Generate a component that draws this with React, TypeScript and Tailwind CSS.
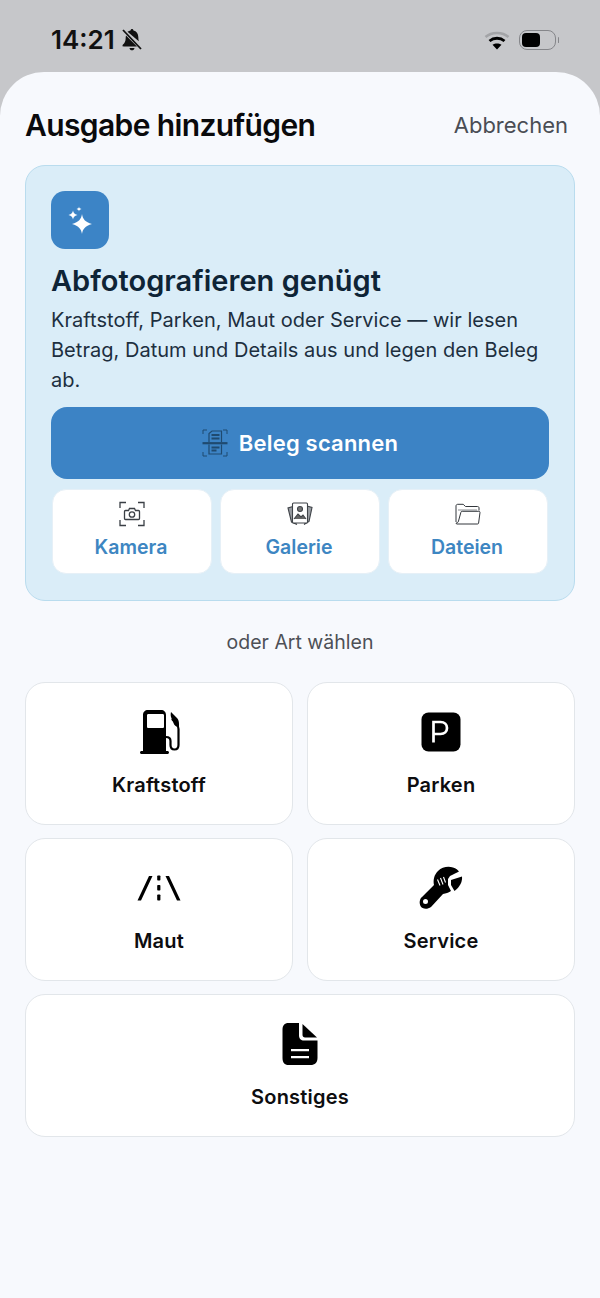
import React from 'react';

const FuelIcon = () => (
  <svg width="44" height="46" viewBox="-2 0 44 46" fill="none">
    <path fillRule="evenodd" clipRule="evenodd" d="M4 6c0-3 2-5 5-5h13c3 0 5 2 5 5v36h1.500c.8 0 1.500.6 1.500 1.500S29.300 45 28.500 45h-26C1.700 45 1 44.300 1 43.500S1.700 42 2.500 42H4V6ZM9.500 5C8.500 5 8 5.500 8 6.500v11c0 1 .5 1.500 1.500 1.500h14c1 0 1.500-.5 1.500-1.500v-11c0-1-.5-1.500-1.500-1.500h-14Z" fill="#000" />
    <path d="M27 28c3 0 4.500 1 4.500 4v4c0 2.500 1.500 4.500 4 4.500s4-2 4-4.500V20c0-2-.8-3.500-2-5.500l-4-4" stroke="#000" strokeWidth="2.200" strokeLinecap="round" />
    <path d="M32 3l6 6c1.500 1.500 2 3.500 2 6v3c-3 0-5-2-5.500-4L32 8c-.4-1.500-.4-3.500 0-5Z" fill="#000" />
  </svg>
);

const ParkingIcon = () => (
  <svg width="40" height="40" viewBox="0 0 40 40">
    <rect x="0.500" y="0.500" width="39" height="39" rx="7" fill="#000" />
    <path d="M12.500 30.500V10h7c4 0 6.500 2.400 6.500 6s-2.500 6-6.500 6h-7" fill="none" stroke="#fff" strokeWidth="2.700" />
  </svg>
);

const RoadIcon = () => (
  <svg width="44" height="26" viewBox="0 0 44 26">
    <path d="M12 1h3.500L4 25.500H.5L12 1ZM28.500 1H32l11.500 24.500H40L28.500 1Z" fill="#000" />
    <rect x="20.200" y="0.500" width="3.200" height="5" rx="0.800" fill="#000" />
    <rect x="20.200" y="10" width="3.200" height="5.500" rx="0.800" fill="#000" />
    <rect x="20.200" y="19.500" width="3.200" height="6" rx="0.800" fill="#000" />
  </svg>
);

const WrenchIcon = () => (
  <svg width="44" height="44" viewBox="0 0 44 44">
    <path fillRule="evenodd" clipRule="evenodd" d="M3 31L15 19C14 14 15 9 19 5C23 1 29 0 34 1.500C37 2.500 39 4 40 5.500L31 10L29 13L29 19L32 25C29 27 27 27.500 24 28L12 41C8 44 3 43 1.500 40C0 37 .5 33 3 31ZM9 35.500a2.500 2.500 0 1 0-5 0a2.500 2.500 0 1 0 5 0Z" fill="#000" />
    <path d="M18.500 13.500l2.500 6M21.500 12l2.500 6.500M24.500 11l2 5.500" stroke="#fff" strokeWidth="1.100" fill="none" />
    <path d="M32 14L43 10.500C43.500 15 41.500 20.500 35.500 25L32 19Z" fill="#000" />
  </svg>
);

const DocIcon = () => (
  <svg width="36" height="44" viewBox="0 0 36 44">
    <path fillRule="evenodd" clipRule="evenodd" d="M6.500 1H17v12.500c0 3 2 5 5 5h13.500V36c0 4.500-2.500 7-7 7h-22c-4 0-6-2.500-6-7V7.500C.5 3.500 2.500 1 6.500 1ZM9 27h18v2.300H9V27Zm0 7h18v2.300H9V34Z" fill="#000" />
    <path d="M20.500 2L35 15.500H23c-1.500 0-2.500-1-2.500-2.500V2Z" fill="#000" />
  </svg>
);

const SparkleIcon = () => (
  <svg width="26" height="28" viewBox="0 0 26 28" fill="#fff">
    <path d="M15 8c.8 5 3 8 10 10-7 2-9.200 5-10 10-.8-5-3-8-10-10 7-2 9.200-5 10-10Z" />
    <path d="M6 4.500c.4 2.500 1.300 3.500 4.500 4.500-3.200 1-4.100 2-4.500 4.500C5.600 11 4.700 10 1.500 9c3.200-1 4.100-2 4.500-4.500Z" />
    <path d="M12 .5c.2 1.500.7 2 2.500 2.500-1.800.5-2.300 1-2.500 2.500C11.800 4 11.300 3.500 9.500 3c1.800-.5 2.300-1 2.500-2.500Z" />
  </svg>
);

const ScanIcon = () => (
  <svg width="26" height="28" viewBox="0 0 26 28" fill="none" stroke="#1f4a70" strokeWidth="1.200">
    <path d="M1 5V1h4M21 1h4v4M1 23v4h4M21 27h4v-4" strokeWidth="1" />
    <path d="M7 13V4.500L10 2h9.500v11M7 15.500V25h12.500v-9.500" />
    <path d="M0.500 14.200h25" strokeWidth="2.200" />
    <path d="M9.500 6h8M9.500 9.500h8M9.500 18.500h8M9.500 21.500h5" strokeWidth="1.800" />
  </svg>
);

const CameraIcon = () => (
  <svg width="26" height="26" viewBox="0 0 26 26" fill="none" stroke="#3a3f45" strokeWidth="1.300">
    <path d="M1 7V1.500h6M19 1.500h6V7M1 19v5.500h6M19 24.500h6V19" />
    <path d="M6.500 9.500h3l1-2h5l1 2h3c.7 0 1 .4 1 1v7c0 .7-.3 1-1 1h-13c-.7 0-1-.3-1-1v-7c0-.6.3-1 1-1Z" />
    <circle cx="13" cy="13.500" r="2.700" />
  </svg>
);

const GalleryIcon = () => (
  <svg width="26" height="24" viewBox="0 0 26 24" fill="none" stroke="#3f4348" strokeWidth="1.100">
    <path d="M6 4.500L1 6l3.500 14 5.500 2.500" fill="#9a9ea3" />
    <path d="M20 4l5 1.500-3 14-5 3" fill="#9a9ea3" />
    <rect x="5.500" y="1" width="15" height="20" rx="1" fill="#fff" />
    <circle cx="13" cy="7" r="2.500" fill="#777" />
    <path d="M7 17l4-5 3 3 2-2 3 4" fill="#666" />
  </svg>
);

const FolderIcon = () => (
  <svg width="26" height="22" viewBox="0 0 26 22" fill="none" stroke="#33373c" strokeWidth="1">
    <path d="M1 19V3c0-1 .7-1.700 1.700-1.700h5.500l2.300 2.200h12c1 0 1.500.6 1.500 1.500v2.500" />
    <path d="M3 7h19" stroke="#8a8d91" />
    <path d="M1 20c0 .6.4 1 1 1h20.500c.7 0 1-.4 1.100-1L25 9.500c0-.8-.4-1.200-1.200-1.200H7.200c-.7 0-1.100.3-1.300 1L3.500 18c-.4 1.500-1.200 2-2.500 2Z" />
  </svg>
);

const BellSlashIcon = () => (
  <svg width="22" height="24" viewBox="0 0 21 24" fill="#111">
    <path d="M10.500 1c.8 0 1.400.6 1.500 1.500 3 .7 4.800 3.200 4.800 6.500 0 1.600.2 3 .5 4.200L6 3.800C7 3 8 2.700 9 2.500c.1-.9.700-1.500 1.500-1.500ZM4.500 7.500L15.500 18.500H2c-.6 0-1-.4-1-.9 0-.4.200-.7.500-1 1.500-1.400 2.700-3.300 2.700-6.600 0-.9.100-1.700.3-2.500ZM8 20h5c-.2 1.400-1.200 2.300-2.500 2.300S8.200 21.400 8 20Z" />
    <path d="M1.500 2l18 19" stroke="#111" strokeWidth="1.800" />
  </svg>
);

const WifiIcon = () => (
  <svg width="26" height="20" viewBox="0 0 26 20" fill="none">
    <path d="M1.500 7C7.500 1.500 18.500 1.500 24.500 7" stroke="#a3a4a7" strokeWidth="2.500" />
    <path d="M5.500 11c4.300-3.700 10.700-3.700 15 0" stroke="#000" strokeWidth="2.800" />
    <path d="M13 19.500L8.500 14.800c2.700-1.900 6.300-1.900 9 0L13 19.500Z" fill="#000" />
  </svg>
);

const SubButton = ({ icon, label }: { icon: React.ReactNode; label: string }) => (
  <button className="h-[85px] bg-white rounded-[14px] border border-[#e6f0f7] flex flex-col items-center">
    <div className="h-[26px] mt-[11px] flex items-center justify-center">{icon}</div>
    <span className="mt-[5px] pr-[2px] text-[19.500px] leading-[30px] font-semibold text-[#3d86c2]">{label}</span>
  </button>
);

const TypeCard = ({ icon, label, className = '' }: { icon: React.ReactNode; label: string; className?: string }) => (
  <button className={`h-[143px] bg-white rounded-[20px] border border-[#e2e6ea] flex flex-col items-center ${className}`}>
    <div className="h-[46px] mt-[26px] flex items-center justify-center">{icon}</div>
    <span className="mt-[15px] text-[20px] leading-[30px] font-semibold text-[#0d0d0f] tracking-[0.2px]">{label}</span>
  </button>
);

export default function App() {
  return (
    <div className="w-[600px] h-[1298px] bg-[#c6c7ca] overflow-hidden font-['Inter','Liberation_Sans',sans-serif]">
      {/* status bar */}
      <div className="h-[72px] flex items-center justify-between pl-[51px] pr-[41px] pt-[8px]">
        <div className="flex items-center gap-[6px] -mt-[1px]">
          <span className="text-[26px] leading-[32px] font-semibold text-[#111]">14:21</span>
          <BellSlashIcon />
        </div>
        <div className="flex items-center gap-[9px]">
          <WifiIcon />
          <div className="flex items-center gap-[2px]">
            <div className="w-[37px] h-[20px] rounded-[8px] border-[1.500px] border-[#85868a] p-[2px]">
              <div className="w-[18px] h-full rounded-[4px] bg-black" />
            </div>
            <div className="w-[1.500px] h-[6px] rounded-full bg-[#85868a]" />
          </div>
        </div>
      </div>

      {/* sheet */}
      <div className="h-[1226px] bg-[#f7f9fd] rounded-t-[44px] px-[25px]">
        <div className="h-[93px] flex items-center justify-between pt-[12px]">
          <h1 className="text-[30px] leading-[40px] font-semibold text-[#0a0a0c] tracking-[-0.62px]">Ausgabe hinzufügen</h1>
          <button className="text-[22px] leading-[30px] text-[#4a4d54] pr-[7px]">Abbrechen</button>
        </div>

        {/* scan card */}
        <div className="h-[436px] rounded-[20px] bg-[#daedf8] border border-[#b9dcee] px-[25px] pt-[25px]">
          <div className="w-[58px] h-[58px] rounded-[14px] bg-[#3c84c6] flex items-center justify-center">
            <SparkleIcon />
          </div>
          <h2 className="mt-[12px] text-[29px] leading-[40px] font-semibold text-[#0e2436] tracking-[0.02px]">Abfotografieren genügt</h2>
          <p className="mt-[4px] text-[20px] leading-[30px] text-[#1d2f3f] tracking-[0.03px]">
            Kraftstoff, Parken, Maut oder Service — wir lesen Betrag, Datum und Details aus und legen den Beleg ab.
          </p>
          <button className="mt-[12px] w-full h-[72px] rounded-[16px] bg-[#3c83c5] flex items-center justify-center gap-[11px]">
            <ScanIcon />
            <span className="text-[22px] font-semibold text-white tracking-[0.2px]">Beleg scannen</span>
          </button>
          <div className="mt-[10px] grid grid-cols-3 gap-[8px] px-[1px]">
            <SubButton icon={<CameraIcon />} label="Kamera" />
            <SubButton icon={<GalleryIcon />} label="Galerie" />
            <SubButton icon={<FolderIcon />} label="Dateien" />
          </div>
        </div>

        <p className="mt-[27px] text-center text-[19.500px] leading-[28px] text-[#4d5056]">oder Art wählen</p>

        {/* expense types */}
        <div className="mt-[26px] grid grid-cols-2 gap-x-[14px] gap-y-[13px]">
          <TypeCard icon={<FuelIcon />} label="Kraftstoff" />
          <TypeCard icon={<ParkingIcon />} label="Parken" />
          <TypeCard icon={<RoadIcon />} label="Maut" />
          <TypeCard icon={<WrenchIcon />} label="Service" />
          <TypeCard icon={<DocIcon />} label="Sonstiges" className="col-span-2" />
        </div>
      </div>
    </div>
  );
}
